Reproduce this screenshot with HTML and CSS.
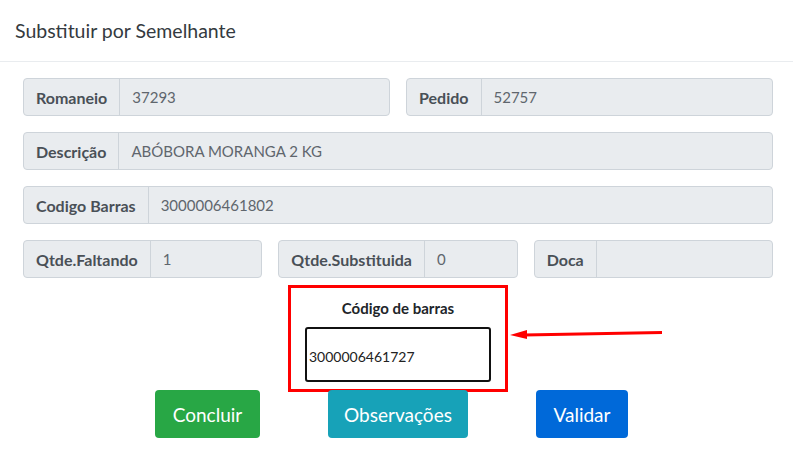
FILE: index.html
```html
<!DOCTYPE html>
<html lang="pt-BR">
<head>
<meta charset="utf-8">
<title>Substituir por Semelhante</title>
<link rel="stylesheet" href="styles.css">
</head>
<body>
<div class="modal">
  <div class="modal-header">
    <h5 class="modal-title">Substituir por Semelhante</h5>
  </div>
  <div class="modal-body">
    <div class="row cols-2">
      <div class="input-group"><span class="label">Romaneio</span><span class="value">37293</span></div>
      <div class="input-group"><span class="label">Pedido</span><span class="value">52757</span></div>
    </div>
    <div class="row">
      <div class="input-group"><span class="label">Descrição</span><span class="value">ABÓBORA MORANGA 2 KG</span></div>
    </div>
    <div class="row">
      <div class="input-group"><span class="label">Codigo Barras</span><span class="value">3000006461802</span></div>
    </div>
    <div class="row cols-3">
      <div class="input-group"><span class="label">Qtde.Faltando</span><span class="value">1</span></div>
      <div class="input-group"><span class="label">Qtde.Substituida</span><span class="value">0</span></div>
      <div class="input-group"><span class="label">Doca</span><span class="value"></span></div>
    </div>
    <div class="barcode-wrap">
      <div class="barcode-box">
        <div class="barcode-title">Código de barras</div>
        <div class="barcode-input">3000006461727</div>
      </div>
    </div>
    <div class="actions">
      <button class="btn btn-green">Concluir</button>
      <button class="btn btn-teal">Observações</button>
      <button class="btn btn-blue">Validar</button>
    </div>
  </div>
  <svg class="arrow" width="793" height="452" viewBox="0 0 793 452">
    <line x1="524" y1="335" x2="662" y2="332.5" stroke="#ff0000" stroke-width="3"/>
    <polygon points="510,335 527,330 527,339" fill="#ff0000"/>
  </svg>
</div>
</body>
</html>
```
FILE: styles.css
```css
* { box-sizing: border-box; }
html, body { margin: 0; padding: 0; background: #fff; }
body {
  font-family: "Lato", "Open Sans", sans-serif;
  color: #212529;
  width: 793px;
  height: 452px;
  overflow: hidden;
}
.modal { position: relative; width: 793px; height: 452px; }
.modal-header {
  height: 62px;
  padding: 0 15px;
  display: flex;
  align-items: center;
  border-bottom: 1px solid #e9ecef;
}
.modal-title {
  margin: 0;
  font-size: 19.5px;
  font-weight: 400;
  color: #343a40;
  padding-bottom: 1px;
}
.modal-body { padding: 16px 20px 0 23px; }
.row { display: grid; grid-template-columns: 1fr; gap: 16px; margin-bottom: 16px; }
.row.cols-2 { grid-template-columns: 1fr 1fr; }
.row.cols-3 { grid-template-columns: 1fr 1fr 1fr; margin-bottom: 7px; }
.input-group {
  display: flex;
  height: 38px;
  background: #e9ecef;
  border: 1px solid #ced4da;
  border-radius: 4px;
  font-size: 16px;
  color: #495057;
}
.label {
  display: flex;
  align-items: center;
  padding: 0 12px;
  font-weight: 700;
  border-right: 1px solid #ced4da;
  color: #495057;
}
.value {
  display: flex;
  align-items: center;
  padding: 0 12px;
  font-size: 15px;
  color: #5f666d;
}
.barcode-wrap { display: flex; justify-content: center; }
.barcode-box {
  width: 220px;
  height: 107px;
  border: 3px solid #ff0000;
  display: flex;
  flex-direction: column;
  align-items: center;
  margin-bottom: -2px;
}
.barcode-title {
  margin-top: 10px;
  font-size: 15px;
  font-weight: 700;
  color: #212529;
  line-height: 20px;
}
.barcode-input {
  margin-top: 9px;
  width: 186px;
  height: 55px;
  flex: none;
  border: 2px solid #111;
  border-radius: 3px;
  display: flex;
  align-items: center;
  padding: 3px 2px 0;
  font-size: 14px;
  color: #222;
}
.actions {
  display: flex;
  justify-content: center;
  gap: 68px;
  padding-right: 13px;
}
.btn {
  height: 48px;
  border: 0;
  border-radius: 4px;
  color: #fff;
  font-family: inherit;
  font-size: 19px;
  padding: 0;
}
.btn-green { background: #28a745; width: 105px; }
.btn-teal { background: #17a2b8; width: 140px; }
.btn-blue { background: #0069d9; width: 92px; }
.arrow { position: absolute; left: 0; top: 0; pointer-events: none; }
```
